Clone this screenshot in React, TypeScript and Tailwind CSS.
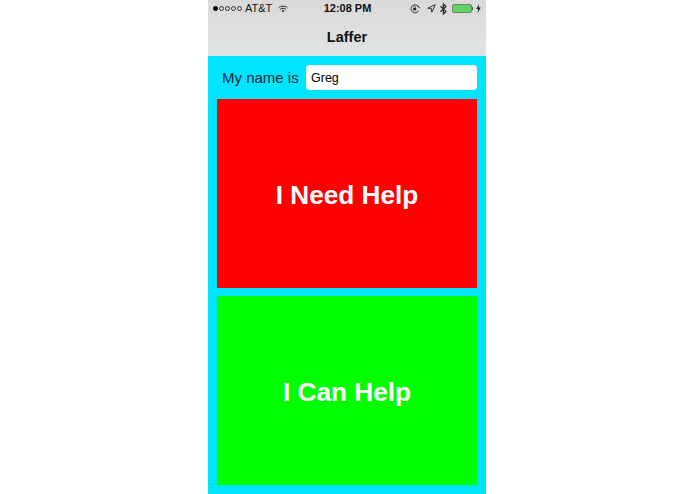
import { useState } from "react";

function StatusBar() {
  return (
    <div className="flex h-[17px] items-center justify-between px-[5px] text-[11px] leading-none text-[#111]">
      <div className="flex w-[100px] items-center">
        <div className="flex items-center gap-[1px]">
          <span className="h-[5px] w-[5px] rounded-full border border-black bg-black" />
          <span className="h-[5px] w-[5px] rounded-full border-[0.5px] border-[#333]" />
          <span className="h-[5px] w-[5px] rounded-full border-[0.5px] border-[#333]" />
          <span className="h-[5px] w-[5px] rounded-full border-[0.5px] border-[#333]" />
          <span className="h-[5px] w-[5px] rounded-full border-[0.5px] border-[#333]" />
        </div>
        <span className="ml-[3px]">AT&amp;T</span>
        <svg className="ml-[6px]" width="10" height="8" viewBox="0 0 11 8" fill="none" stroke="#222" strokeWidth="1.1">
          <path d="M0.6 2.8C3.4 0.2 7.6 0.2 10.4 2.8" />
          <path d="M2.3 4.4C4.1 2.8 6.9 2.8 8.7 4.4" />
          <path d="M5.5 7.6L3.9 5.9C4.8 5.2 6.2 5.2 7.1 5.9Z" fill="#222" stroke="none" />
        </svg>
      </div>
      <span className="pl-[1px] font-semibold">12:08 PM</span>
      <div className="flex w-[100px] items-center justify-end">
        <svg width="11" height="10" viewBox="0 0 11 10" fill="none" stroke="#222" strokeWidth="0.9">
          <path d="M8.6 6.6A4 4 0 1 1 8.6 3" />
          <path d="M7.4 2.8L10.4 4.6L8.8 2Z" fill="#222" stroke="none" />
          <rect x="3.2" y="4" width="3" height="2.4" fill="#222" stroke="none" />
          <path d="M3.9 4V3.1A0.8 0.8 0 0 1 5.5 3.1V4" strokeWidth="0.6" />
        </svg>
        <svg className="ml-[6px]" width="9" height="9" viewBox="0 0 9 9" fill="none" stroke="#222" strokeWidth="0.9">
          <path d="M8.4 0.6L0.8 4.2L4.4 4.6L4.8 8.2Z" />
        </svg>
        <svg className="ml-[4px]" width="7" height="12" viewBox="0 0 7 12" fill="none" stroke="#222" strokeWidth="1.2">
          <path d="M0.5 3.2L6 8.4L3.4 11V1L6 3.6L0.5 8.8" />
        </svg>
        <div className="ml-[5px] flex items-center">
          <div className="h-[9px] w-[20px] rounded-[2px] border border-[#777] bg-[#5fd45f]" />
          <div className="h-[3px] w-[1px] bg-[#555]" />
        </div>
        <svg className="ml-[3px]" width="5" height="9" viewBox="0 0 5 9" fill="#222">
          <path d="M3.2 0L0.2 5H2.2L1.6 9L4.8 3.6H2.7Z" />
        </svg>
      </div>
    </div>
  );
}

function BigButton({ label, className }: { label: string; className: string }) {
  return (
    <button className={`flex h-[189px] w-full items-center justify-center pt-[5px] text-[26.2px] font-bold text-white ${className}`}>
      {label}
    </button>
  );
}

export default function App() {
  const [name, setName] = useState("Greg");

  return (
    <div className="h-[494px] w-[695px] overflow-hidden bg-white pl-[208px] font-['Liberation_Sans',sans-serif]">
      <div className="flex h-full w-[278px] flex-col bg-[#00e5ff]">
        <div className="h-[56px] shrink-0 bg-gradient-to-b from-[#d9d9d9] to-[#e1e4e4]">
          <StatusBar />
          <div className="pt-[8px] text-center text-[14.5px] font-bold leading-[24px] text-[#111]">Laffer</div>
        </div>
        <div className="flex flex-col px-[9px] pt-[9px]">
          <div className="flex items-center">
            <label className="ml-[5px] w-[84px] text-[15px] leading-[25px] text-[#0c2a33]">My name is</label>
            <input
              value={name}
              onChange={(e) => setName(e.target.value)}
              className="h-[25px] w-[171px] rounded-[4px] bg-white px-[5px] text-[12.5px] text-black outline-none"
            />
          </div>
          <BigButton label="I Need Help" className="mt-[9px] bg-[#ff0000]" />
          <BigButton label="I Can Help" className="mt-[8px] bg-[#00ff00]" />
        </div>
      </div>
    </div>
  );
}
